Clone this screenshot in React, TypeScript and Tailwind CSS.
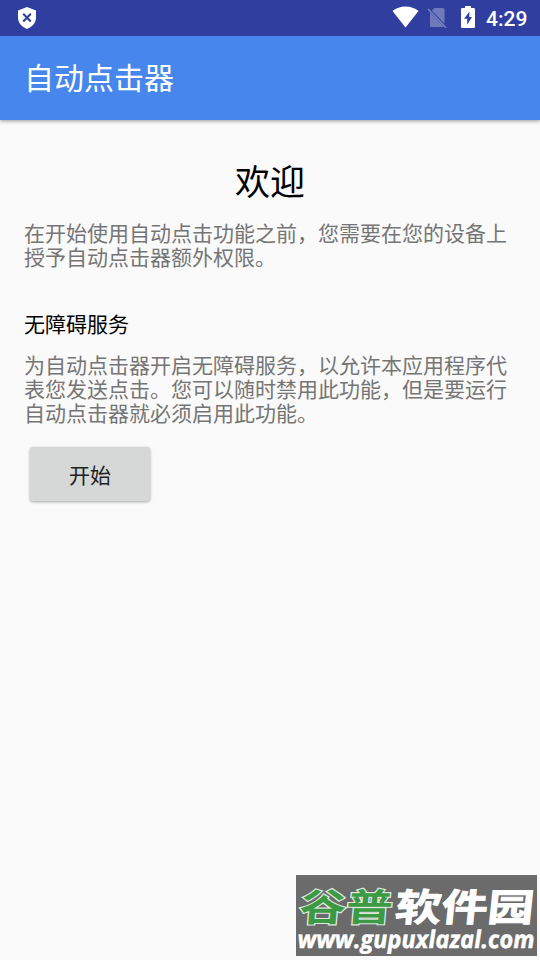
import React from 'react';

const ShieldIcon: React.FC = () => (
  <svg width="20" height="24" viewBox="0 0 20 24" aria-hidden="true">
    <path d="M10 1 1 4.600v7.200c0 5 3.600 9 9 11.200 5.400-2.200 9-6.200 9-11.200V4.600z" fill="#fff" />
    <path d="m6.200 7.800 7.600 7.600M13.800 7.800l-7.600 7.600" stroke="#303f9f" strokeWidth="2.1" />
  </svg>
);

const WifiIcon: React.FC = () => (
  <svg width="27" height="22" viewBox="0 0 27 22" aria-hidden="true">
    <path d="M.5 5C4 2 8.500.5 13.500.5S23 2 26.500 5l-13 16.500z" fill="#fff" />
  </svg>
);

const NoSimIcon: React.FC = () => (
  <svg width="20" height="22" viewBox="0 0 20 22" aria-hidden="true">
    <path
      d="M7.300 1H16q1.500 0 1.500 1.500v14.200L4.800 3.500zM3 5.400 17 20H4.200Q3 20 3 18.800z"
      fill="#6f79bc"
    />
    <path d="m1 2 18 18.700" stroke="#7882c1" strokeWidth="1.500" />
  </svg>
);

const BatteryIcon: React.FC = () => (
  <svg width="14" height="22" viewBox="0 0 14 22" aria-hidden="true">
    <path d="M4 0h6v2h2.700Q14 2 14 3.300v17.400Q14 22 12.700 22H1.300Q0 22 0 20.700V3.300Q0 2 1.300 2H4z" fill="#fff" />
    <path d="M8.500 5.500 3 12.700h3.200v6L11 11H8.200z" fill="#303f9f" />
  </svg>
);

const StatusBar: React.FC = () => (
  <div className="relative z-10 flex h-9 items-center justify-between bg-[#303f9f] pl-[17px] pr-3 text-white">
    <ShieldIcon />
    <div className="flex items-center pb-[2px]">
      <span className="mr-[7px] flex -translate-x-px">
        <WifiIcon />
      </span>
      <span className="flex pt-[2px]">
        <NoSimIcon />
      </span>
      <span className="ml-[14px] flex">
        <BatteryIcon />
      </span>
      <span className="ml-[11px] w-[42px] whitespace-nowrap pt-[4px] font-['Roboto',sans-serif] text-[21px] font-medium leading-6">
        4:29
      </span>
    </div>
  </div>
);

// Site badge in the bottom right corner
const SiteBadge: React.FC = () => (
  <div className="absolute bottom-1 right-[3px] h-[81px] w-[241px] overflow-hidden bg-[#6b6b6b]">
    <svg width="241" height="81" viewBox="0 0 241 81">
      <g fontFamily="'Noto Sans CJK SC', sans-serif" fontWeight="700" fontSize="44">
        <text
          transform="translate(2.500 46) skewX(-5) scale(1.060 .86)"
          fill="#3c9a45"
          stroke="#dfe9df"
          strokeWidth="2.600"
          paintOrder="stroke"
        >
          谷普
        </text>
        <text
          transform="translate(98 46) skewX(-6) scale(1.050 .86)"
          fill="#fff"
          stroke="#fff"
          strokeWidth="1"
        >
          软件园
        </text>
      </g>
      <text
        transform="translate(2 73) skewX(3)"
        textLength="237"
        lengthAdjust="spacingAndGlyphs"
        fontFamily="'Open Sans', sans-serif"
        fontSize="24.500"
        fontWeight="700"
        fontStyle="italic"
        fill="#fff"
        stroke="#fff"
        strokeWidth=".5"
      >
        www.gupuxlazal.com
      </text>
    </svg>
  </div>
);

export default function App() {
  return (
    <div className="relative h-[960px] w-[540px] overflow-hidden bg-[#fafafa] font-['Noto_Sans_CJK_SC',sans-serif]">
      <StatusBar />
      <header className="flex h-[84px] items-center bg-[#4787ed] px-6 pb-1 shadow-[0_1px_4px_rgba(0,0,0,0.4)]">
        <h1 className="text-[30px] leading-9 text-white">自动点击器</h1>
      </header>

      <main className="px-6 pt-[34px] text-[21px] leading-6 text-[#757575]">
        <h2 className="text-center text-[35px] leading-[52px] text-black">欢迎</h2>
        <p className="mt-[14px] whitespace-nowrap">
          在开始使用自动点击功能之前，您需要在您的设备上
          <br />
          授予自动点击器额外权限。
        </p>
        <h3 className="mt-[43px] text-black">无障碍服务</h3>
        <p className="mt-[17px] whitespace-nowrap">
          为自动点击器开启无障碍服务，以允许本应用程序代
          <br />
          表您发送点击。您可以随时禁用此功能，但是要运行
          <br />
          自动点击器就必须启用此功能。
        </p>
        <button
          type="button"
          className="ml-[6px] mt-[23px] flex h-[54px] w-[120px] items-center justify-center rounded-[3px] bg-[#d6d8d7] text-[#212121] shadow-[0_1px_3px_rgba(0,0,0,0.35)]"
        >
          开始
        </button>
      </main>

      <SiteBadge />
    </div>
  );
}
